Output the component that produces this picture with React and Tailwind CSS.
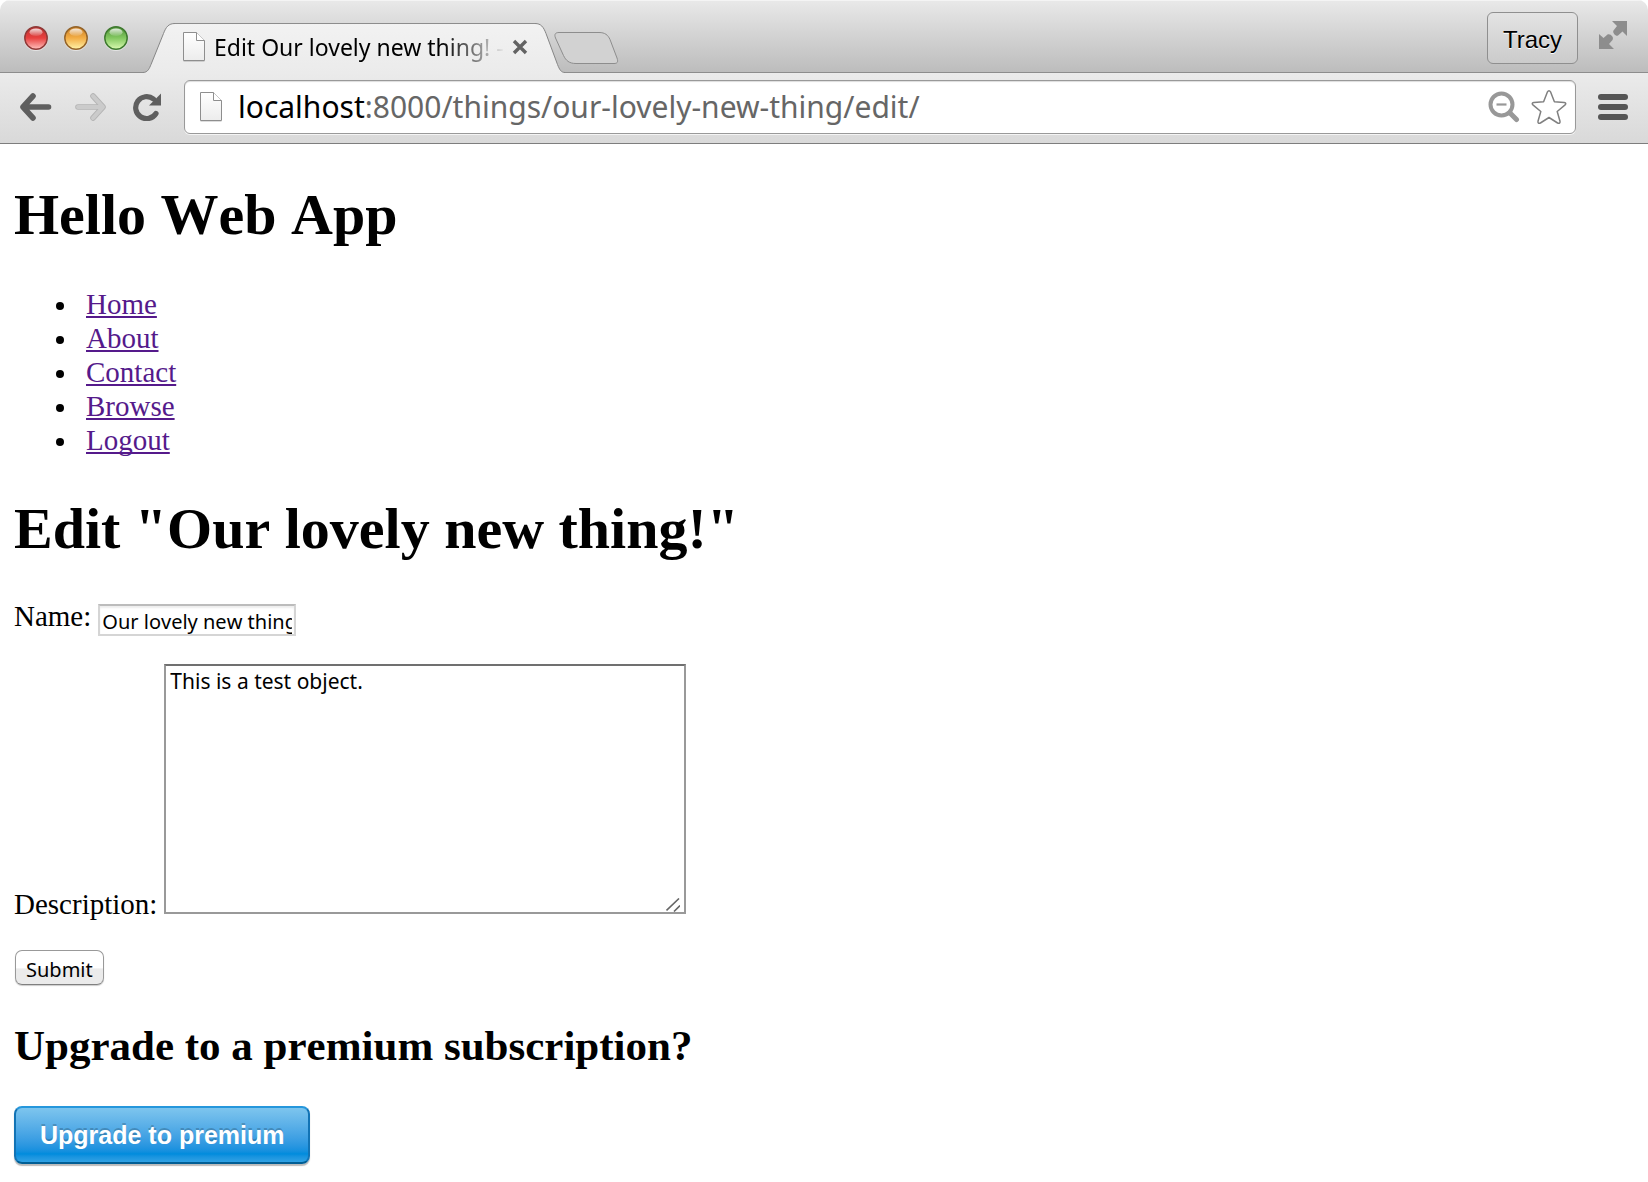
const navLinks = ["Home", "About", "Contact", "Browse", "Logout"];

function TrafficLight({ id, label, rim, top, mid, bottom }) {
  return (
    <button aria-label={label} className="size-6">
      <svg viewBox="0 0 24 24" className="size-6 overflow-visible">
        <defs>
          <linearGradient id={id} x1="0" y1="0" x2="0" y2="1">
            <stop offset="0" stopColor={top} />
            <stop offset="0.5" stopColor={mid} />
            <stop offset="1" stopColor={bottom} />
          </linearGradient>
          <linearGradient id={id + "-shine"} x1="0" y1="0" x2="0" y2="1">
            <stop offset="0" stopColor="#fff" stopOpacity="0.85" />
            <stop offset="1" stopColor="#fff" stopOpacity="0.1" />
          </linearGradient>
        </defs>
        <circle cx="12" cy="13" r="12" fill="#fff" opacity="0.5" />
        <circle cx="12" cy="12" r="11.2" fill={`url(#${id})`} stroke={rim} strokeWidth="1.5" />
        <ellipse cx="12" cy="6.2" rx="6.5" ry="3.8" fill={`url(#${id}-shine)`} />
      </svg>
    </button>
  );
}

function PageIcon({ id }) {
  return (
    <svg viewBox="0 0 22 30" className="h-[30px] w-[22px] shrink-0">
      <defs>
        <linearGradient id={id} x1="0" y1="0" x2="0" y2="1">
          <stop offset="0" stopColor="#fff" />
          <stop offset="1" stopColor="#ececec" />
        </linearGradient>
      </defs>
      <path d="M0.5 29.6H21.5" stroke="#000" strokeOpacity="0.15" />
      <path d="M0.5 0.5H13.5L21.5 8.5V28.5H0.5Z" fill={`url(#${id})`} stroke="#8e8e8e" />
      <path d="M13.5 0.5V8.5H21.5" fill="#fff" stroke="#8e8e8e" />
    </svg>
  );
}

function TabStrip() {
  return (
    <div className="flex h-[73px] items-start bg-linear-to-b from-[#e9e9e9] to-[#bcbcbc] shadow-[inset_0_-1px_0_#8d8d8d,inset_0_1px_0_#f4f4f4]">
      <div className="flex w-[143px] shrink-0 gap-4 pt-[26px] pl-6">
        <TrafficLight id="close" label="Close" rim="#8f3a38" top="#b8302f" mid="#e8403f" bottom="#ffc0bd" />
        <TrafficLight id="minimize" label="Minimize" rim="#94642a" top="#c77c22" mid="#f3ad45" bottom="#fff3a8" />
        <TrafficLight id="maximize" label="Zoom window" rim="#3f7a30" top="#4c8f35" mid="#83c860" bottom="#d9fbb0" />
      </div>

      <div className="flex h-[73px]">
        <svg viewBox="0 0 32 73" className="h-[73px] w-8 shrink-0">
          <defs>
            <linearGradient id="tabFill" gradientUnits="userSpaceOnUse" x1="0" y1="23" x2="0" y2="73">
              <stop offset="0" stopColor="#f2f2f2" />
              <stop offset="1" stopColor="#ebebeb" />
            </linearGradient>
          </defs>
          <path d="M0 73V72.5C5 72.5 6.5 68 8 64.5L20.5 33.5C23 27 25.5 23.5 32 23.5V73Z" fill="url(#tabFill)" />
          <path d="M0 72.5C5 72.5 6.5 68 8 64.5L20.5 33.5C23 27 25.5 23.5 32 23.5" fill="none" stroke="#868686" />
        </svg>
        <div className="mt-[23px] flex h-[50px] w-[360px] items-center border-t border-[#8d8d8d] bg-linear-to-b from-[#f2f2f2] to-[#ebebeb] pb-1 pl-2">
          <PageIcon id="tabPage" />
          <span className="ml-[9px] w-[292px] shrink-0 bg-linear-to-r from-black from-78% to-transparent to-100% bg-clip-text font-['Noto_Sans',sans-serif] text-[23px] leading-[34px] whitespace-nowrap text-transparent">
            Edit Our lovely new thing! -
          </span>
          <button aria-label="Close tab" className="ml-[6px] size-4 shrink-0">
            <svg viewBox="0 0 16 16" className="size-4">
              <path d="M2 2L14 14M14 2L2 14" stroke="#636363" strokeWidth="3.4" />
            </svg>
          </button>
        </div>
        <svg viewBox="0 0 30 73" className="h-[73px] w-[30px] shrink-0">
          <path d="M0 73V23.5C6 23.5 8.5 27 11 33.5L22.5 64.5C24.5 69.5 26 72.5 30 72.5V73Z" fill="url(#tabFill)" />
          <path d="M0 23.5C6 23.5 8.5 27 11 33.5L22.5 64.5C24.5 69.5 26 72.5 30 72.5" fill="none" stroke="#868686" />
        </svg>
      </div>

      <button aria-label="New tab" className="-ml-3 pt-8">
        <svg viewBox="0 0 66 33" className="h-[33px] w-[66px]">
          <path d="M6 0.5H46C52 0.5 55 3 57 7.5L64 26C65.5 30.5 64 31.5 61 31.5H23C16 31.5 13 28.5 10.5 23.5L2.5 6C1 2 2.5 0.5 6 0.5Z" fill="#d2d2d2" stroke="#8d8d8d" />
        </svg>
      </button>

      <div className="ml-auto flex shrink-0 items-start pt-3 pr-5">
        <button className="mr-5 h-[52px] w-[91px] rounded-[6px] border border-[#8f8f8f] bg-linear-to-b from-[#e3e3e3] to-[#cbcbcb] pt-1 font-['Liberation_Sans',Arial,sans-serif] text-[24px] text-black [text-shadow:0_1px_0_#fff]">
          Tracy
        </button>
        <button aria-label="Full screen" className="pt-2">
          <svg viewBox="0 0 30 30" className="size-[30px]">
            <g fill="#8d8d8d">
              <path d="M14 1H29V16L24.5 11.5L20 15.5C18.5 17 14 13 15.5 10.5L19 6Z" />
              <path d="M1 14L5.5 18L9.5 14.5C12 13 16.5 17 14.5 20L11 24L16 29H1Z" />
            </g>
          </svg>
        </button>
      </div>
    </div>
  );
}

function Toolbar() {
  return (
    <div className="flex items-center border-b border-[#7d7d7d] bg-linear-to-b from-[#ebebeb] to-[#d9d9d9] pt-[7px] pr-5 pb-[9px] pl-5">
      <button aria-label="Back" className="w-8">
        <svg viewBox="0 0 32 28" className="h-7 w-8">
          <path d="M13 3L3 14L13 25M4 14H28.5" fill="none" stroke="#5f5f5f" strokeWidth="5.6" strokeLinecap="round" strokeLinejoin="round" />
        </svg>
      </button>
      <button aria-label="Forward" className="ml-[23px] w-8">
        <svg viewBox="0 0 32 28" className="h-7 w-8">
          <path d="M18 3L28 14L18 25M27 14H3" fill="none" stroke="#b4b4b4" strokeWidth="5.6" strokeLinecap="round" strokeLinejoin="round" />
          <path d="M18 3L28 14L18 25M27 14H3" fill="none" stroke="#cbcbcb" strokeWidth="4" strokeLinecap="round" strokeLinejoin="round" />
        </svg>
      </button>
      <button aria-label="Reload" className="ml-[26px] w-7">
        <svg viewBox="0 0 28 28" className="size-7">
          <path d="M23 20.5A11 11 0 1 1 20.5 6" fill="none" stroke="#5f5f5f" strokeWidth="5.2" strokeLinecap="round" />
          <path d="M28 0.5V12.5H16Z" fill="#5f5f5f" />
        </svg>
      </button>

      <div className="ml-[23px] flex h-[54px] flex-1 items-center rounded-[6px] border border-[#999] bg-white pr-2 pl-[15px] shadow-[0_1px_0_#f4f4f4,inset_0_1px_1px_#ddd]">
        <PageIcon id="urlPage" />
        <a
          href="http://localhost:8000/things/our-lovely-new-thing/edit/"
          className="ml-4 flex-1 font-['Noto_Sans',sans-serif] text-[30px] leading-[40px] text-[#666]"
        >
          <span className="text-black">localhost</span>:8000/things/our-lovely-new-thing/edit/
        </a>
        <button aria-label="Zoom out" className="mr-[11px]">
          <svg viewBox="0 0 32 32" className="size-8">
            <circle cx="13.5" cy="13.5" r="11" fill="none" stroke="#989898" strokeWidth="4" />
            <path d="M22 22L28.5 28.5" stroke="#989898" strokeWidth="5" strokeLinecap="round" />
            <path d="M8.5 13.5H18.5" stroke="#989898" strokeWidth="2.2" />
          </svg>
        </button>
        <button aria-label="Bookmark this page">
          <svg viewBox="0 0 36 36" className="size-9">
            <path d="M16.3 3.2Q18 0.3 19.7 3.2L23.4 12.8L33.2 13.4Q36 14 33.8 16.2L26.2 22.5L29 32.2Q29.3 35.2 26.6 34L18 28.5L9.4 34Q6.7 35.2 7 32.2L9.8 22.5L2.2 16.2Q0 14 2.8 13.4L12.6 12.8Z" fill="#fff" stroke="#808080" strokeWidth="1.5" strokeLinejoin="round" />
          </svg>
        </button>
      </div>

      <button aria-label="Menu" className="ml-[22px] flex flex-col gap-1">
        <span className="h-[6px] w-[30px] rounded-full bg-[#555]" />
        <span className="h-[6px] w-[30px] rounded-full bg-[#555]" />
        <span className="h-[6px] w-[30px] rounded-full bg-[#555]" />
      </button>
    </div>
  );
}

export default function App() {
  return (
    <div className="min-h-screen bg-white">
      <header className="overflow-hidden rounded-t-[10px]">
        <TabStrip />
        <Toolbar />
      </header>

      <main className="px-[14px] pt-[38px] pb-4 font-['Liberation_Serif','Times_New_Roman',serif] text-[29px] leading-[34px] text-black [font-kerning:none]">
        <h1 className="text-[58px] leading-[66px] font-bold">Hello Web App</h1>

        <ul className="mt-[39px] pl-[42px]">
          {navLinks.map((name) => (
            <li key={name} className="flex items-center before:mt-1 before:mr-[22px] before:size-2 before:rounded-full before:bg-black">
              <a href={"#" + name.toLowerCase()} className="text-[#551a8b] underline decoration-2 underline-offset-2 [text-decoration-skip-ink:none]">
                {name}
              </a>
            </li>
          ))}
        </ul>

        <h1 className="mt-[39px] text-[58px] leading-[66px] font-bold">Edit "Our lovely new thing!"</h1>

        <form className="mt-[37px]" onSubmit={(e) => e.preventDefault()}>
          <div className="flex items-end">
            <label htmlFor="name" className="pb-[3px]">
              Name:
            </label>
            <input
              id="name"
              type="text"
              defaultValue="Our lovely new thing!"
              className="ml-[7px] h-8 w-[198px] border-2 border-[#d5d5d5] border-t-[#bcbcbc] bg-white px-[2px] pt-[2px] font-['Noto_Sans',sans-serif] text-[20px] leading-[26px] shadow-[inset_0_2px_2px_#eee]"
            />
          </div>

          <div className="mt-7 flex items-end">
            <label htmlFor="description">Description:</label>
            <div className="relative mb-[7px] ml-[7px]">
              <textarea
                id="description"
                defaultValue="This is a test object."
                className="block h-[250px] w-[522px] resize-none border-2 border-[#999] border-t-[#707070] bg-white px-1 py-[2px] font-['Noto_Sans',sans-serif] text-[21px] leading-[26px]"
              />
              <svg viewBox="0 0 14 14" className="pointer-events-none absolute right-[6px] bottom-[2px] size-[14px]">
                <path d="M0.5 12.5L13 0.5M8 13.5L14 7.5" stroke="#666" strokeWidth="1.6" />
              </svg>
            </div>
          </div>

          <button
            type="submit"
            className="mt-[29px] ml-px block h-[35px] rounded-[7px] border border-[#999] border-b-[#808080] bg-linear-to-b from-white from-50% to-[#ebebeb] to-55% px-[10px] pt-1 font-['Noto_Sans',sans-serif] text-[20px] leading-[28px] shadow-[0_1px_1px_#ccc]"
          >
            Submit
          </button>
        </form>

        <h2 className="mt-9 text-[43px] leading-[50px] font-bold">Upgrade to a premium subscription?</h2>

        <button className="mt-[35px] h-[58px] rounded-[8px] border-2 border-[#1273b5] border-t-[#2597dc] border-b-[#015e94] bg-linear-to-b from-[#7dc5ee] via-[#008cdd] via-85% to-[#30a2e4] px-6 font-['Liberation_Sans',Arial,sans-serif] text-[25px] leading-[30px] font-bold text-white shadow-[0_2px_1px_#bbb] [text-shadow:0_-2px_0_#00000033]">
          Upgrade to premium
        </button>
      </main>
    </div>
  );
}
